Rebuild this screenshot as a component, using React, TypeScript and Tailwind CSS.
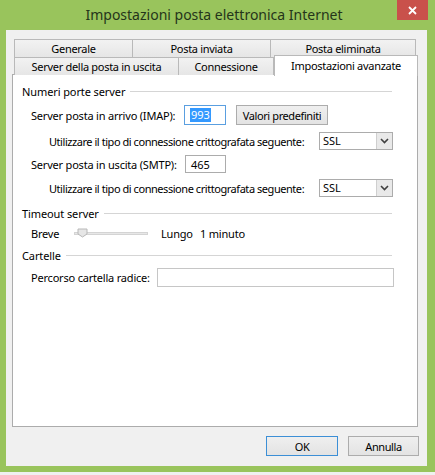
import { ReactNode } from "react";

const font = "font-['Segoe_UI','Noto_Sans',sans-serif]";

function Tab({ label, width, first }: { label: string; width: string; first?: boolean }) {
  return (
    <div
      className={`${width} h-[18px] flex items-center justify-center border-t border-r border-[#b9b9b9] bg-gradient-to-b from-[#f2f2f2] to-[#e6e6e6] text-[11px] leading-none tracking-[-0.3px] whitespace-nowrap ${
        first ? "border-l" : ""
      }`}
    >
      {label}
    </div>
  );
}

function GroupHeader({ label }: { label: string }) {
  return (
    <div className="flex items-center h-[16px] pl-[9px] pr-[25px]">
      <span className="text-[11px] leading-none tracking-[-0.1px] pr-[5px] whitespace-nowrap">{label}</span>
      <div className="flex-1 h-px bg-[#d5d5d5]" />
    </div>
  );
}

function Select({ value }: { value: string }) {
  return (
    <div className="w-[74px] h-[18px] flex border border-[#acacac] bg-white">
      <span className="flex-1 pl-[3px] text-[11px] leading-[16px]">{value}</span>
      <div className="w-[16px] h-full flex items-center justify-center bg-[#e9e9e9] border-l border-[#cfcfcf]">
        <svg width="9" height="6" viewBox="0 0 9 6">
          <path d="M1 1 L4.5 4.5 L8 1" fill="none" stroke="#404040" strokeWidth="1.6" />
        </svg>
      </div>
    </div>
  );
}

function Button({ children, width, primary }: { children: ReactNode; width: string; primary?: boolean }) {
  return (
    <div
      className={`${width} h-[20px] flex items-center justify-center text-[11px] leading-none tracking-[-0.4px] whitespace-nowrap bg-gradient-to-b from-[#efefef] to-[#e3e3e3] border ${
        primary ? "border-[#3c8fd6]" : "border-[#acacac]"
      }`}
    >
      {children}
    </div>
  );
}

const label = "text-[11px] leading-none tracking-[-0.2px] whitespace-nowrap";

export default function App() {
  return (
    <div className={`w-[435px] h-[475px] bg-[#f0f0f0] text-black ${font}`}>
      <div className="h-[472px] bg-[#99c45c] flex flex-col">
        {/* caption */}
        <div className="h-[30px] flex items-start shrink-0">
          <div className="flex-1" />
          <div className="pt-[5px] text-[14px] leading-[20px] text-[#25351a] whitespace-nowrap">
            Impostazioni posta elettronica Internet
          </div>
          <div className="flex-1 flex justify-end pr-[7px]">
            <div className="w-[31px] h-[20px] bg-[#c9514b] flex items-center justify-center">
              <svg width="9" height="9" viewBox="0 0 9 9">
                <path d="M1 1 L8 8 M8 1 L1 8" stroke="white" strokeWidth="1.8" />
              </svg>
            </div>
          </div>
        </div>

        {/* client area */}
        <div className="flex-1 ml-[6px] mr-[8px] mb-[6px] bg-[#f0f0f0] flex flex-col pt-[9px]">
          <div className="ml-[6px] w-[406px] flex flex-col">
            <div className="flex ml-[2px]">
              <Tab label="Generale" width="w-[119px]" first />
              <Tab label="Posta inviata" width="w-[138px]" />
              <Tab label="Posta eliminata" width="w-[145px]" />
            </div>
            <div className="flex ml-[2px] h-[18px] -mb-px relative z-10">
              <Tab label="Server della posta in uscita" width="w-[165px]" first />
              <Tab label="Connessione" width="w-[95px]" />
              <div className="self-end w-[144px] h-[21px] -mb-[1px] bg-white border-t border-l border-r border-[#b9b9b9] flex justify-center pt-[3px] text-[11px] leading-[14px] tracking-[-0.3px] whitespace-nowrap">
                Impostazioni avanzate
              </div>
            </div>

            {/* tab page */}
            <div className="h-[353px] bg-white border border-[#acacac] flex flex-col pt-[8px]">
              <GroupHeader label="Numeri porte server" />

              <div className="flex items-center h-[20px] mt-[6px] pl-[18px]">
                <span className={`w-[153px] ${label}`}>Server posta in arrivo (IMAP):</span>
                <div className="w-[42px] h-[20px] border border-[#5a9fe0] flex items-center pl-[5px]">
                  <span className="bg-[#3399ff] text-white text-[11px] leading-[14px] px-px">993</span>
                </div>
                <div className="ml-[10px]">
                  <Button width="w-[92px]">Valori predefiniti</Button>
                </div>
              </div>

              <div className="flex items-center h-[18px] mt-[7px] pl-[36px]">
                <span className={`w-[270px] ${label} tracking-[-0.45px]`}>
                  Utilizzare il tipo di connessione crittografata seguente:
                </span>
                <Select value="SSL" />
              </div>

              <div className="flex items-center h-[18px] mt-[5px] pl-[18px]">
                <span className={`w-[154px] ${label}`}>Server posta in uscita (SMTP):</span>
                <div className="w-[41px] h-[18px] border border-[#acacac] flex items-center pl-[5px] text-[11px] leading-none">
                  465
                </div>
              </div>

              <div className="flex items-center h-[18px] mt-[6px] pl-[36px]">
                <span className={`w-[270px] ${label} tracking-[-0.45px]`}>
                  Utilizzare il tipo di connessione crittografata seguente:
                </span>
                <Select value="SSL" />
              </div>

              <div className="mt-[8px]">
                <GroupHeader label="Timeout server" />
              </div>

              <div className={`flex items-center h-[16px] mt-[4px] pl-[18px] ${label}`}>
                <span className="w-[43px]">Breve</span>
                <div className="w-[74px] h-[10px] flex items-center">
                  <div className="w-full h-[3px] bg-[#e7e7e7] border border-[#d4d4d4] flex items-center">
                    <svg width="11" height="10" viewBox="0 0 11 10" className="ml-[2px] shrink-0">
                      <path d="M1 1 H10 V6 L5.5 9 L1 6 Z" fill="#e6e6e6" stroke="#b8b8b8" />
                    </svg>
                  </div>
                </div>
                <span className="ml-[13px] w-[39px]">Lungo</span>
                <span>1 minuto</span>
              </div>

              <div className="mt-[6px]">
                <GroupHeader label="Cartelle" />
              </div>

              <div className="flex items-center h-[19px] mt-[5px] pl-[18px]">
                <span className={`w-[126px] ${label}`}>Percorso cartella radice:</span>
                <div className="w-[237px] h-[19px] border border-[#c6c6c6] bg-white" />
              </div>
            </div>
          </div>

          <div className="flex justify-end gap-[10px] pr-[8px] mt-[9px]">
            <Button width="w-[72px]" primary>
              OK
            </Button>
            <Button width="w-[71px]">Annulla</Button>
          </div>
        </div>
      </div>
    </div>
  );
}
